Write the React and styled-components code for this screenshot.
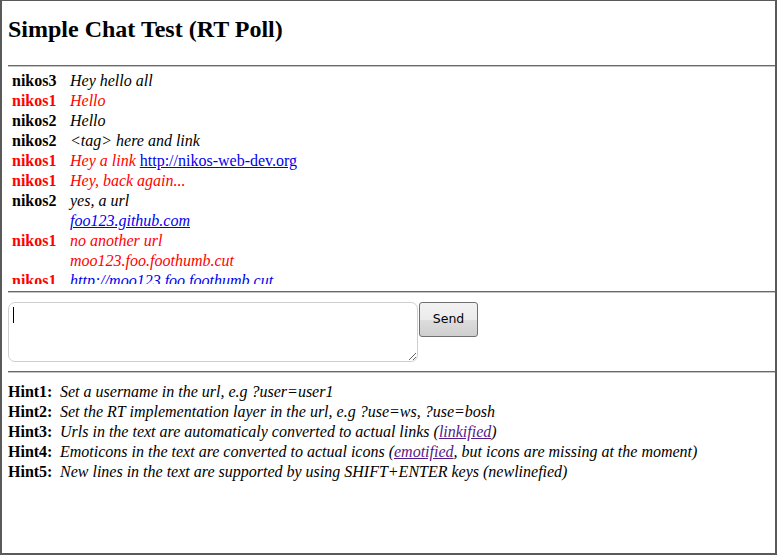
import React from 'react';
import styled, {createGlobalStyle} from 'styled-components';

const GlobalStyle = createGlobalStyle`
html, body {
    margin: 0;
    padding: 0;
    background: #fff;
}
body {
    font-family: "Liberation Serif", "Times New Roman", serif;
    font-size: 16px;
    color: #000;
}
`

const messages = [
    {user: 'nikos3', text: 'Hey hello all'},
    {user: 'nikos1', mine: true, text: 'Hello'},
    {user: 'nikos2', text: 'Hello'},
    {user: 'nikos2', text: '<tag> here and link'},
    {user: 'nikos1', mine: true, text: 'Hey a link ', link: 'http://nikos-web-dev.org', upright: true},
    {user: 'nikos1', mine: true, text: 'Hey, back again...'},
    {user: 'nikos2', text: 'yes, a url'},
    {user: '', text: '', link: 'foo123.github.com'},
    {user: 'nikos1', mine: true, text: 'no another url'},
    {user: '', mine: true, text: 'moo123.foo.foothumb.cut'},
    {user: 'nikos1', mine: true, text: '', link: 'http://moo123.foo.foothumb.cut'},
]

const hints = [
    {label: 'Hint1:', text: 'Set a username in the url, e.g ?user=user1'},
    {label: 'Hint2:', text: 'Set the RT implementation layer in the url, e.g ?use=ws, ?use=bosh'},
    {label: 'Hint3:', text: 'Urls in the text are automaticaly converted to actual links (', link: 'linkified', after: ')'},
    {label: 'Hint4:', text: 'Emoticons in the text are converted to actual icons (', link: 'emotified', after: ', but icons are missing at the moment)'},
    {label: 'Hint5:', text: 'New lines in the text are supported by using SHIFT+ENTER keys (newlinefied)'},
]

const App = () => {
    return (
        <Frame>
            <GlobalStyle/>
            <Title>Simple Chat Test (RT Poll)</Title>
            <Rule/>
            <ChatLog>
                {messages.map((m, index)=>(
                    <ChatRow key={index} $mine={m.mine}>
                        <UserName>{m.user}</UserName>
                        <MessageText>
                            {m.text}
                            {m.link && <ChatLink href="#" $upright={m.upright}>{m.link}</ChatLink>}
                        </MessageText>
                    </ChatRow>
                ))}
            </ChatLog>
            <Rule $top={7}/>
            <Composer>
                <InputWrap>
                    <MessageInput defaultValue=""/>
                    <Caret/>
                </InputWrap>
                <SendButton>Send</SendButton>
            </Composer>
            <Rule $top={9}/>
            <Hints>
                {hints.map((h)=>(
                    <HintRow key={h.label}>
                        <HintLabel>{h.label}</HintLabel>
                        <HintText>
                            {h.text}
                            {h.link && <VisitedLink href="#">{h.link}</VisitedLink>}
                            {h.after}
                        </HintText>
                    </HintRow>
                ))}
            </Hints>
        </Frame>
    );
}

const Frame = styled.div`
box-sizing: border-box;
width: 777px;
height: 555px;
border: 2px solid #5a5a5a;
border-top-width: 1px;
padding-left: 6px;
overflow: hidden;
`
const Title = styled.h2`
margin: 15px 0 0;
font-size: 24px;
line-height: 27px;
font-weight: bold;
`
const Rule = styled.hr`
margin: ${p => p.$top ?? 22}px 0 0;
height: 0;
border: 0;
border-top: 1px solid #6a6a6a;
border-bottom: 1px solid #c4c4c4;
`
const ChatLog = styled.div`
box-sizing: border-box;
height: 217px;
padding: 4px 0 0 4px;
overflow: hidden;
`
const ChatRow = styled.div`
display: grid;
grid-template-columns: 58px 1fr;
line-height: 20px;
color: ${p => p.$mine ? '#ff0000' : '#000'};
`
const UserName = styled.span`
font-weight: bold;
`
const MessageText = styled.span`
font-style: italic;
white-space: pre;
`
const ChatLink = styled.a`
color: #0000ee;
text-decoration: underline;
font-style: ${p => p.$upright ? 'normal' : 'italic'};
`
const Composer = styled.div`
display: flex;
align-items: flex-start;
gap: 1px;
margin-top: 9px;
`
const InputWrap = styled.div`
position: relative;
display: flex;
`
const MessageInput = styled.textarea`
box-sizing: border-box;
width: 410px;
height: 60px;
margin: 0;
padding: 2px 4px;
border: 1px solid #cfcfcf;
border-radius: 7px;
font-family: "Liberation Sans", Arial, sans-serif;
font-size: 13px;
outline: none;
resize: both;
`
const Caret = styled.span`
position: absolute;
left: 5px;
top: 5px;
width: 1px;
height: 16px;
background: #000;
`
const SendButton = styled.button`
box-sizing: border-box;
width: 59px;
height: 35px;
margin: 0;
padding: 0 0 2px;
border: 1px solid #707070;
border-radius: 3px;
background: linear-gradient(#f2f2f2 0%, #ebebeb 50%, #dddddd 51%, #cfcfcf 100%);
font-family: "DejaVu Sans", Tahoma, sans-serif;
font-size: 12.5px;
color: #000;
`
const Hints = styled.div`
padding-top: 9px;
`
const HintRow = styled.div`
display: flex;
line-height: 20px;
`
const HintLabel = styled.span`
width: 52px;
flex: none;
font-weight: bold;
`
const HintText = styled.span`
font-style: italic;
white-space: nowrap;
`
const VisitedLink = styled.a`
color: #551a8b;
text-decoration: underline;
`
export default App;
